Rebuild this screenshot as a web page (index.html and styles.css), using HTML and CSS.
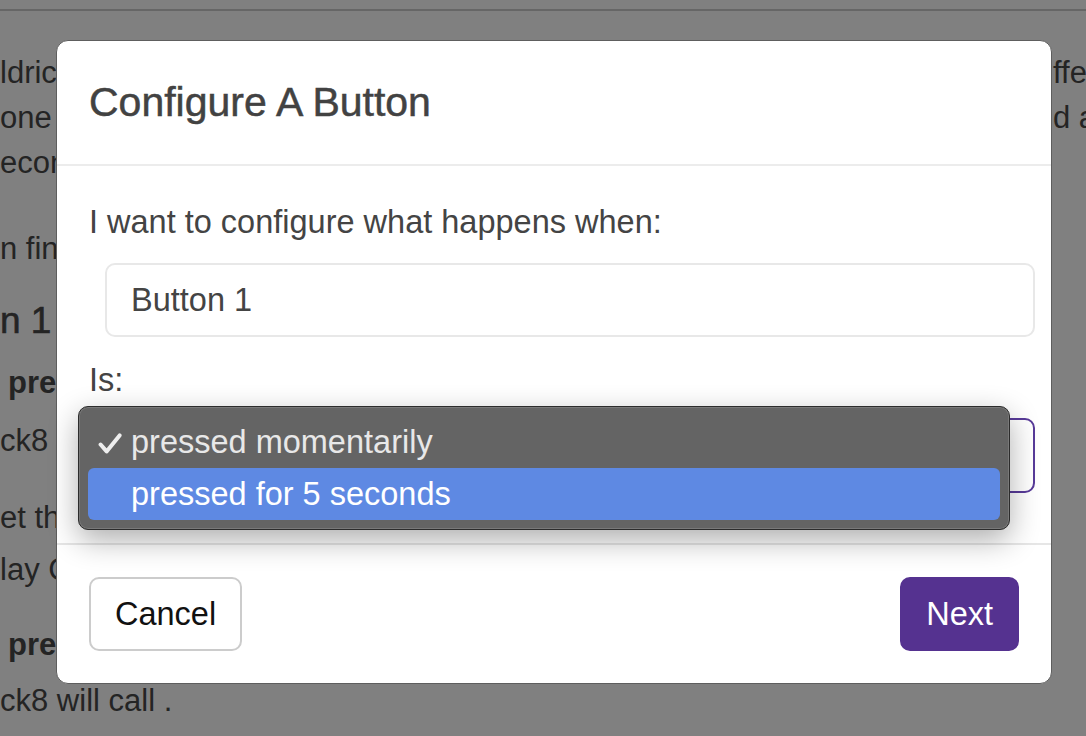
FILE: index.html
```html
<!DOCTYPE html>
<html lang="en">
<head>
<meta charset="utf-8">
<title>Configure A Button</title>
<link rel="stylesheet" href="styles.css">
</head>
<body>
<div class="page">
  <div class="topbar"></div>
  <div class="content">
    <div class="para p1">
      <div class="line"><span class="left">ldrick turns on the lights when a button is pressed, to</span><span class="right">ffect</span></div>
      <div class="line"><span class="left">one for a short press, another for a long press, and</span><span class="right">d a</span></div>
      <div class="line"><span class="left">econd action when it is held down.</span></div>
    </div>
    <div class="para p2"><div class="line">n finished, press save to store it.</div></div>
    <div class="heading">n 1</div>
    <div class="line bold l-pre1">pressed momentarily</div>
    <div class="line l-ck1">ck8 will call the scene.</div>
    <div class="line l-et">et the lights in the room.</div>
    <div class="line l-lay">lay Configuration</div>
    <div class="line bold l-pre2">pressed for 5 seconds</div>
    <div class="line l-ck2">ck8 will call .</div>
  </div>
</div>

<div class="modal" role="dialog" aria-labelledby="modal-title">
  <div class="modal-header">
    <h5 class="modal-title" id="modal-title">Configure A Button</h5>
  </div>
  <div class="modal-body">
    <div class="label">I want to configure what happens when:</div>
    <div class="field">Button 1</div>
    <div class="label label-is">Is:</div>
    <div class="field select">
      <span class="select-value">pressed momentarily</span>
      <div class="popup">
        <div class="option">
          <svg class="check" width="24" height="21" viewBox="0 0 24 21"><path d="M2.6 11.5 L8.6 18.4 L21.6 2.4" fill="none" stroke="currentColor" stroke-width="4" stroke-linecap="round" stroke-linejoin="round"/></svg>
          <span>pressed momentarily</span>
        </div>
        <div class="option selected"><span>pressed for 5 seconds</span></div>
      </div>
    </div>
  </div>
  <div class="modal-footer">
    <button class="btn btn-cancel">Cancel</button>
    <button class="btn btn-next">Next</button>
  </div>
</div>
</body>
</html>
```

FILE: styles.css
```css
html, body {
  margin: 0;
  padding: 0;
}
body {
  width: 1086px;
  height: 736px;
  overflow: hidden;
  background: #808080;
  font-family: "Liberation Sans", Arial, sans-serif;
  position: relative;
}
.page {
  color: #242424;
  font-size: 31px;
}
.topbar {
  height: 9px;
  border-bottom: 2px solid #666666;
}
.content {
  padding-top: 39px;
}
.line {
  line-height: 45px;
  height: 45px;
  white-space: nowrap;
  display: flex;
}
.line .left {
  flex: 0 0 1053px;
}
.line .right {
  flex: 0 0 auto;
}
.p2 { margin-top: 41px; }
.heading {
  margin-top: 25px;
  font-size: 37px;
  line-height: 50px;
  height: 50px;
  -webkit-text-stroke: 0.6px #242424;
}
.bold { font-weight: bold; padding-left: 8px; }
.l-pre1 { margin-top: 14px; }
.l-ck1 { margin-top: 13px; }
.l-et { margin-top: 32px; }
.l-lay { margin-top: 7px; }
.l-pre2 { margin-top: 30px; }
.l-ck2 { margin-top: 11px; }

/* Modal */
.modal {
  position: absolute;
  left: 56px;
  top: 40px;
  width: 996px;
  box-sizing: border-box;
  background: #ffffff;
  border: 1px solid #5e5e5e;
  border-radius: 12px;
  color: #444444;
}
.modal-header {
  padding: 31px 32px 32px;
  border-bottom: 2px solid #ececec;
}
.modal-title {
  margin: 0;
  font-size: 41px;
  line-height: 60px;
  font-weight: normal;
  color: #424242;
  -webkit-text-stroke: 0.5px #424242;
}
.modal-body {
  padding: 32px 32px 32px;
}
.label {
  font-size: 32.5px;
  line-height: 48px;
}
.label-is {
  margin-top: 19px;
}
.field {
  margin: 17px -16px 0 16px;
  height: 74px;
  box-sizing: border-box;
  border: 2px solid #e8e8e8;
  border-radius: 10px;
  padding: 0 24px;
  display: flex;
  align-items: center;
  font-size: 32.5px;
  color: #444444;
}
.select {
  margin-top: 14px;
  margin-bottom: 18px;
  height: 75px;
  border-color: #583a99;
  position: relative;
}
.select-value {
  visibility: hidden;
}
.popup {
  position: absolute;
  left: -29px;
  top: -14px;
  width: 932px;
  height: 124px;
  box-sizing: border-box;
  padding: 9px;
  background: #646464;
  border: 1px solid #2c2c2c;
  border-radius: 10px;
  box-shadow: inset 0 0 0 1px rgba(255,255,255,0.14), 0 10px 30px rgba(0,0,0,0.32);
}
.option {
  height: 52px;
  display: flex;
  align-items: center;
  padding-left: 43px;
  position: relative;
  color: #e8e8e8;
  font-size: 32.5px;
  border-radius: 6px;
}
.option .check {
  position: absolute;
  left: 10px;
  top: 17px;
  color: #eeeeee;
}
.option.selected {
  background: #5e89e3;
  color: #ffffff;
}
.modal-footer {
  border-top: 2px solid #e6e6e6;
  padding: 32px;
  display: flex;
  justify-content: space-between;
  align-items: center;
}
.btn {
  height: 74px;
  padding: 0 24px;
  border-radius: 10px;
  font-family: "Liberation Sans", Arial, sans-serif;
  font-size: 32.5px;
  box-sizing: border-box;
}
.btn-cancel {
  background: #ffffff;
  border: 2px solid #cccccc;
  color: #111111;
}
.btn-next {
  background: #553290;
  border: 2px solid #553290;
  color: #ffffff;
}
```
